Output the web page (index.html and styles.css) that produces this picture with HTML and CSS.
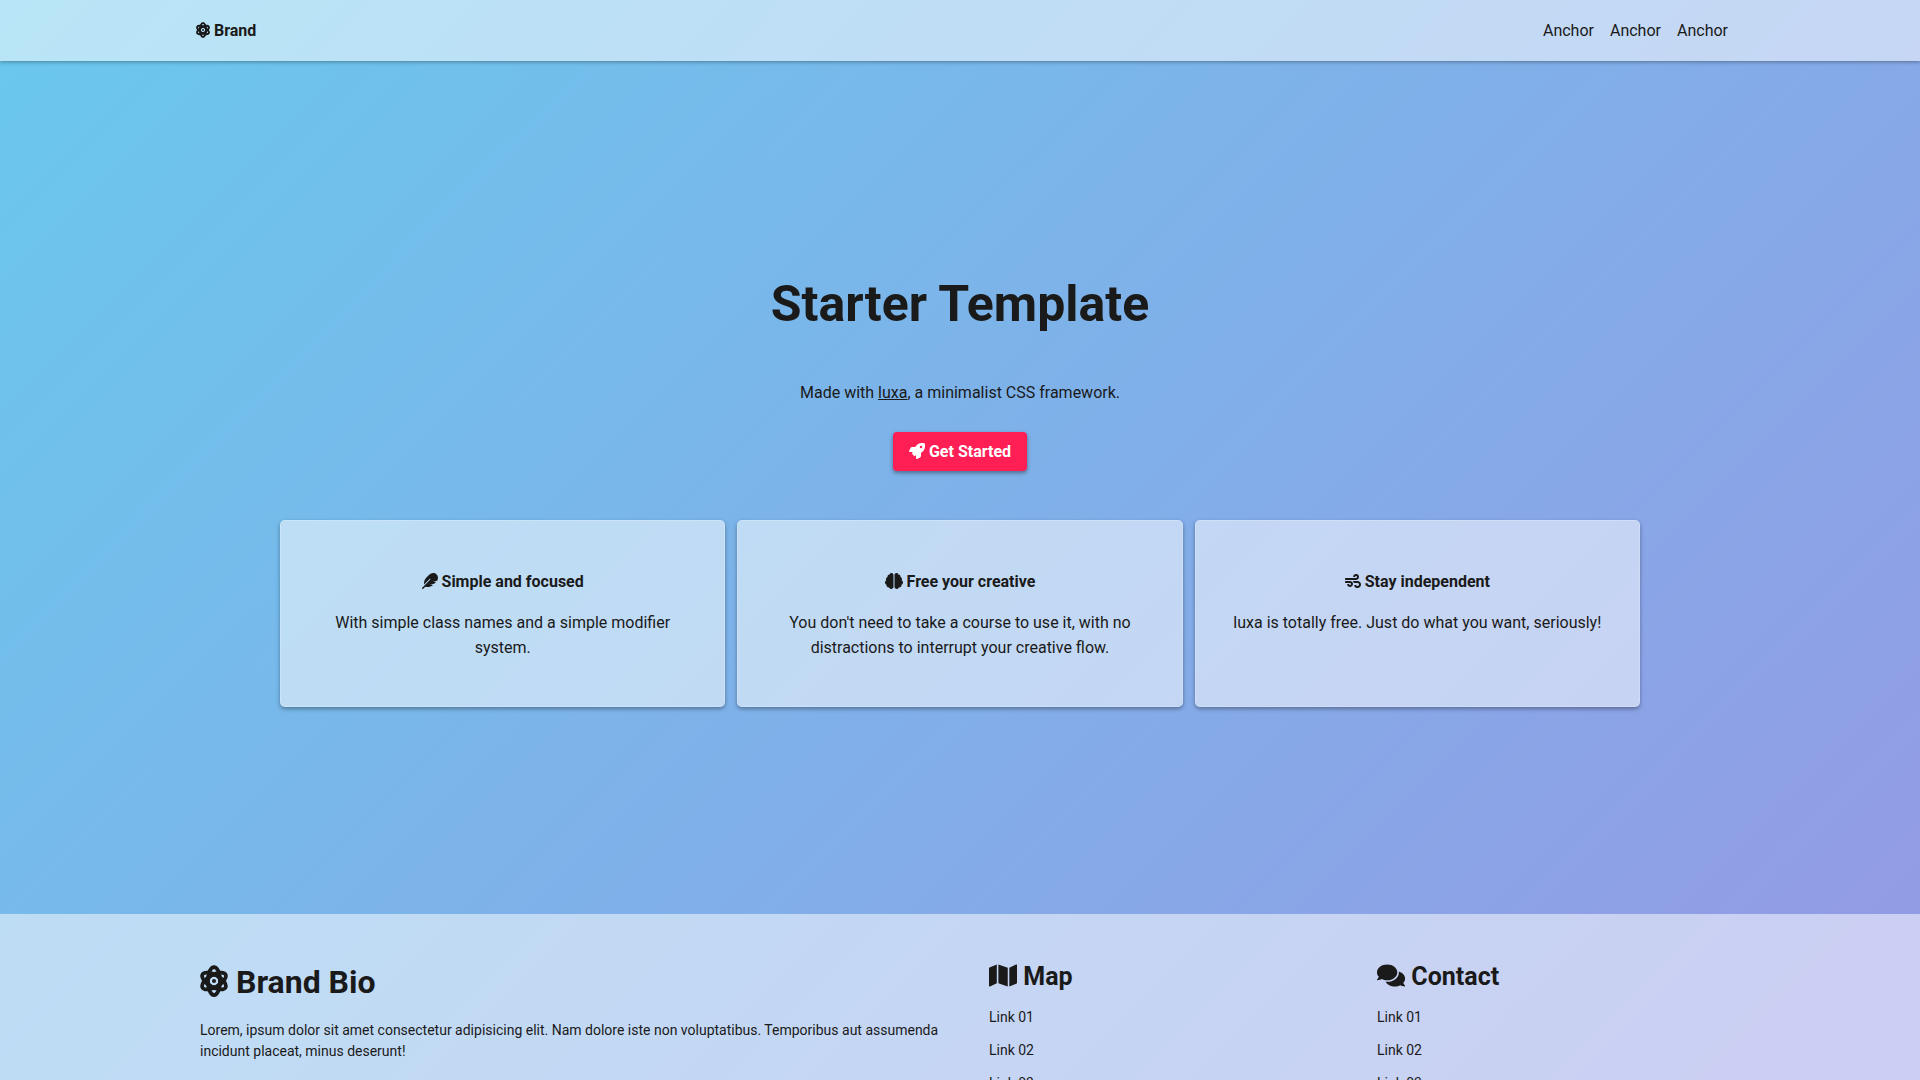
FILE: index.html
```html
<!DOCTYPE html>
<html lang="en">
<head>
<meta charset="utf-8">
<meta name="viewport" content="width=device-width, initial-scale=1">
<title>Starter Template</title>
<link rel="stylesheet" href="styles.css">
</head>
<body>
<svg class="sprite" aria-hidden="true">
  <symbol id="atom" viewBox="0 0 448 512">
    <g fill="none" stroke="currentColor" stroke-width="60">
      <ellipse cx="224" cy="256" rx="98" ry="224"/>
      <ellipse cx="224" cy="256" rx="98" ry="212" transform="rotate(60 224 256)"/>
      <ellipse cx="224" cy="256" rx="98" ry="212" transform="rotate(120 224 256)"/>
      <circle cx="224" cy="256" r="100"/>
    </g>
    <circle cx="224" cy="256" r="32" fill="currentColor"/>
  </symbol>
  <symbol id="rocket" viewBox="0 0 512 512"><path fill="currentColor" d="M505.120 19.094c-1.189-5.531-6.658-11-12.207-12.188C460.716 0 435.507 0 410.407 0 307.175 0 245.269 55.203 199.052 128H94.838c-16.348.016-35.557 11.875-42.887 26.484L2.516 253.297A28.400 28.400 0 0 0 0 264a24 24 0 0 0 24 24h103.816l-22.475 22.469c-11.365 11.361-12.996 32.258 0 45.250l50.904 50.906c11.156 11.188 32.156 13.156 45.277 0l22.475-22.469V488a24 24 0 0 0 24 24 28.600 28.600 0 0 0 10.707-2.516l98.728-49.390c14.629-7.297 26.508-26.500 26.508-42.860V312.797c72.598-46.313 128.035-108.406 128.035-211.094.1-25.203.1-50.406-6.855-82.609zM384.040 168a40 40 0 1 1 40-40 40 40 0 0 1-40 40z"/></symbol>
  <symbol id="feather" viewBox="0 0 512 512"><path fill="currentColor" d="M467.140 44.840c-62.550-62.480-161.670-64.780-252.280 25.730-78.610 78.520-60.980 60.920-85.750 85.660-60.460 60.390-70.390 150.830-63.640 211.170l178.440-178.250c6.260-6.250 16.400-6.250 22.650 0s6.250 16.380 0 22.630L7.040 471.030c-9.380 9.370-9.380 24.570 0 33.940 9.380 9.370 24.600 9.370 33.980 0l66.100-66.030C159.420 454.650 279 457.110 353.950 384h-98.190l147.570-49.140c49.990-49.930 36.380-36.180 46.310-46.860h-97.780l131.540-43.800c45.440-74.460 34.310-148.840-16.260-199.360z"/></symbol>
  <symbol id="brain" viewBox="0 0 576 512"><path fill="currentColor" d="M208 0c-30 0-54.700 21-61 48.300-1 0-2-.3-3-.3-35.300 0-64 28.700-64 64 0 4.800.6 9.500 1.700 14C52.500 138 32 166.600 32 200c0 12.600 3.200 24.300 8.300 34.900C16.300 248.700 0 274.300 0 304c0 33.300 20.400 61.900 49.400 73.900-.9 4.600-1.400 9.300-1.400 14.100 0 39.800 32.200 72 72 72 4.100 0 8.100-.5 12-1.200 9.600 28.500 36.200 49.200 68 49.200 39.800 0 72-32.200 72-72V64c0-35.300-28.700-64-64-64zM576 304c0-29.700-16.300-55.300-40.300-69.100 5.200-10.600 8.300-22.300 8.300-34.900 0-33.400-20.500-62-49.700-74 1-4.500 1.700-9.200 1.700-14 0-35.300-28.700-64-64-64-1 0-2 .3-3 .3C422.700 21 398 0 368 0c-35.300 0-64 28.700-64 64v376c0 39.800 32.200 72 72 72 31.800 0 58.400-20.700 68-49.200 3.900.7 7.900 1.200 12 1.200 39.800 0 72-32.200 72-72 0-4.800-.5-9.500-1.400-14.100 29-12 49.400-40.600 49.400-73.900z"/></symbol>
  <symbol id="wind" viewBox="0 0 512 512"><path fill="currentColor" d="M156.700 256H16c-8.800 0-16 7.200-16 16v32c0 8.800 7.200 16 16 16h142.200c15.900 0 30.800 10.900 33.400 26.600 3.300 20-12.100 37.400-31.600 37.400-14.100 0-26.100-9.200-30.400-21.900-2.100-6.300-8.600-10.100-15.200-10.100H81.600c-9.800 0-17.700 8.800-15.900 18.400 8.600 44.100 47.600 77.600 94.200 77.600 57.100 0 102.700-50.100 95.200-108.600C249 291 205.400 256 156.700 256zM16 224h336c59.700 0 106.800-54.800 93.800-116.700-7.600-36.200-36.900-65.500-73.100-73.100-55.400-11.600-105.100 24.900-114.900 75.500-1.900 9.600 6.100 18.300 15.800 18.300h32.800c6.700 0 13.100-3.800 15.200-10.100C325.900 105.200 337.900 96 352 96c19.400 0 34.900 17.400 31.600 37.400-2.600 15.700-17.400 26.600-33.400 26.600H16c-8.800 0-16 7.200-16 16v32c0 8.800 7.200 16 16 16zm384 32H243.700c19.300 16.600 33.200 38.800 39.800 64H400c26.500 0 48 21.500 48 48s-21.500 48-48 48c-17.900 0-33.300-9.900-41.600-24.400-2.900-5-8.700-7.600-14.500-7.600h-33.800c-10.900 0-19 10.800-15.300 21.100 17.800 50.600 70.500 84.800 129.400 72.300 41.200-8.700 75.100-41.600 84.700-82.700C526.500 321.500 470.500 256 400 256z"/></symbol>
  <symbol id="map" viewBox="0 0 576 512"><path fill="currentColor" d="M0 117.660v346.320c0 11.320 11.430 19.060 21.940 14.860L160 416V32L20.120 87.950A32 32 0 0 0 0 117.660zM192 416l192 64V96L192 32v384zM554.060 33.160L416 96v384l139.880-55.950A32 32 0 0 0 576 394.340V48.020c0-11.320-11.430-19.060-21.940-14.860z"/></symbol>
  <symbol id="comments" viewBox="0 0 576 512"><path fill="currentColor" d="M416 192c0-88.400-93.100-160-208-160S0 103.600 0 192c0 34.300 14.100 65.900 38 92-13.400 30.200-35.500 54.200-35.800 54.500-2.200 2.300-2.800 5.700-1.500 8.700S4.800 352 8 352c36.600 0 66.900-12.300 88.700-25 32.200 15.700 70.300 25 111.300 25 114.900 0 208-71.600 208-160zm122 220c23.900-26 38-57.700 38-92 0-66.900-53.500-124.200-129.300-148.100.9 6.600 1.300 13.300 1.300 20.100 0 105.900-107.700 192-240 192-10.800 0-21.300-.8-31.700-1.900C207.800 439.600 281.800 480 368 480c41 0 79.100-9.200 111.300-25 21.800 12.700 52.100 25 88.700 25 3.200 0 6.100-1.900 7.300-4.800 1.300-2.900.7-6.300-1.500-8.700-.3-.3-22.400-24.200-35.800-54.500z"/></symbol>
</svg>

<header class="navbar">
  <nav class="navbar-inner">
    <a class="brand" href="#"><svg class="icon icon-narrow" aria-hidden="true"><use href="#atom"/></svg> Brand</a>
    <div class="nav-links">
      <a href="#">Anchor</a>
      <a href="#">Anchor</a>
      <a href="#">Anchor</a>
    </div>
  </nav>
</header>

<main class="hero">
  <h1 class="hero-title">Starter Template</h1>
  <p class="hero-text">Made with <a class="text-link" href="#">luxa</a>, a minimalist CSS framework.</p>
  <button class="button" type="button"><svg class="icon" aria-hidden="true"><use href="#rocket"/></svg> Get Started</button>
  <section class="cards">
    <article class="card">
      <h2 class="card-title"><svg class="icon" aria-hidden="true"><use href="#feather"/></svg> Simple and focused</h2>
      <p class="card-text">With simple class names and a simple modifier system.</p>
    </article>
    <article class="card">
      <h2 class="card-title"><svg class="icon icon-wide" aria-hidden="true"><use href="#brain"/></svg> Free your creative</h2>
      <p class="card-text">You don't need to take a course to use it, with no distractions to interrupt your creative flow.</p>
    </article>
    <article class="card">
      <h2 class="card-title"><svg class="icon" aria-hidden="true"><use href="#wind"/></svg> Stay independent</h2>
      <p class="card-text">luxa is totally free. Just do what you want, seriously!</p>
    </article>
  </section>
</main>

<footer class="footer">
  <div class="footer-inner">
    <section class="footer-bio">
      <h2 class="bio-title"><svg class="icon icon-narrow" aria-hidden="true"><use href="#atom"/></svg> Brand Bio</h2>
      <p class="bio-text">Lorem, ipsum dolor sit amet consectetur adipisicing elit. Nam dolore iste non voluptatibus. Temporibus aut assumenda incidunt placeat, minus deserunt!</p>
    </section>
    <section class="footer-column">
      <h3 class="column-title"><svg class="icon icon-wide" aria-hidden="true"><use href="#map"/></svg> Map</h3>
      <ul class="link-list">
        <li><a href="#">Link 01</a></li>
        <li><a href="#">Link 02</a></li>
        <li><a href="#">Link 03</a></li>
      </ul>
    </section>
    <section class="footer-column">
      <h3 class="column-title"><svg class="icon icon-wide" aria-hidden="true"><use href="#comments"/></svg> Contact</h3>
      <ul class="link-list">
        <li><a href="#">Link 01</a></li>
        <li><a href="#">Link 02</a></li>
        <li><a href="#">Link 03</a></li>
      </ul>
    </section>
  </div>
</footer>
</body>
</html>
```
FILE: styles.css
```css
*,
*::before,
*::after {
  box-sizing: border-box;
}

html {
  background: linear-gradient(135deg, #69c8ed, #9599e5) fixed;
}

body {
  display: flex;
  flex-direction: column;
  margin: 0;
  color: #1a1a1a;
  font: 16px/25px Roboto, "Liberation Sans", sans-serif;
}

h1,
h2,
h3,
p,
ul {
  margin: 0;
}

a {
  color: inherit;
  text-decoration: none;
}

.sprite {
  display: none;
}

.icon {
  width: 1em;
  height: 1em;
  vertical-align: -0.125em;
}

.icon-narrow {
  width: 0.875em;
}

.icon-wide {
  width: 1.125em;
}

.navbar {
  background: rgba(255, 255, 255, 0.53);
  box-shadow: 0 1px 4px rgba(0, 0, 0, 0.35);
}

.navbar-inner {
  display: flex;
  align-items: center;
  justify-content: space-between;
  width: 80%;
  min-height: 61px;
  margin: 0 auto;
}

.brand {
  padding-left: 4px;
  font-weight: 700;
}

.nav-links {
  display: flex;
  gap: 16px;
}

.hero {
  display: flex;
  flex-direction: column;
  align-items: center;
  justify-content: center;
  min-height: calc(100vh - 227px);
  padding: 64px 32px 66px;
  text-align: center;
}

.hero-title {
  margin-bottom: 38px;
  font-size: 50px;
  line-height: 76px;
}

.hero-text {
  margin-bottom: 27px;
}

.text-link {
  text-decoration: underline;
}

.button {
  padding: 7px 16px;
  border: 0;
  border-radius: 4px;
  background: #ff1f55;
  box-shadow: 0 2px 4px rgba(0, 0, 0, 0.4);
  color: #fff;
  font: inherit;
  font-weight: 700;
}

.cards {
  display: grid;
  grid-template-columns: repeat(3, 1fr);
  gap: 12px;
  width: 100%;
  max-width: 1360px;
  margin-top: 49px;
}

.card {
  padding: 48px 32px 46px;
  border: 1px solid rgba(255, 255, 255, 0.2);
  border-radius: 5px;
  background: rgba(255, 255, 255, 0.52);
  box-shadow: 0 2px 4px rgba(0, 0, 0, 0.35);
}

.card-title {
  margin-bottom: 16px;
  font-size: 16px;
}

.footer {
  background: rgba(255, 255, 255, 0.52);
}

.footer-inner {
  display: grid;
  grid-template-columns: 789fr 388fr 343fr;
  width: 80%;
  margin: 0 auto;
  padding: 44px 8px;
}

.footer-bio {
  padding-right: 32px;
}

.bio-title {
  margin-bottom: 14px;
  font-size: 32px;
  line-height: 48px;
}

.bio-text,
.link-list {
  font-size: 14px;
  line-height: 21px;
}

.column-title {
  margin-bottom: 11px;
  font-size: 25px;
  line-height: 38px;
}

.link-list {
  display: grid;
  gap: 12px;
  padding: 0;
  list-style: none;
}
```
